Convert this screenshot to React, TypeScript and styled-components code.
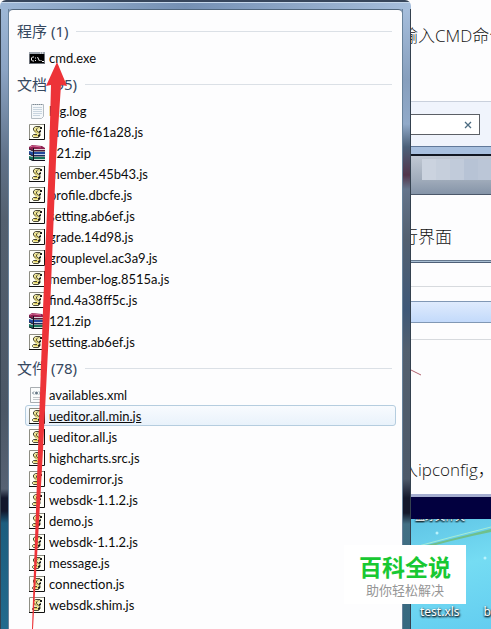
import React from "react";
import styled, { createGlobalStyle } from "styled-components";

const GlobalStyle = createGlobalStyle`
  *, *::before, *::after { box-sizing: border-box; }
  body {
    margin: 0;
    background: #fdfdfe;
    font-family: "Noto Sans", "Noto Sans CJK SC", sans-serif;
  }
  h2, p, ul { margin: 0; padding: 0; font-weight: 400; }
`;

const Screen = styled.div`
  position: relative;
  display: flex;
  min-height: 100vh;
  overflow: hidden;
`;

/* Start menu results */

const Menu = styled.aside`
  flex: 411 1 0;
  min-width: 0;
  display: grid;
  grid-template-columns: 9px 1fr 9px;
  grid-template-rows: 9px 1fr;
  border-radius: 6px 6px 0 0;
  overflow: hidden;
`;

const FrameTop = styled.div`
  grid-column: 1 / -1;
  background: linear-gradient(90deg, #9db7d6, #7590b3 45%, #a6bedc);
  border-top: 2px solid #37465c;
  box-shadow: inset 0 1px #c4d6ea;
`;

const FrameSide = styled.div<{ $side: "left" | "right" }>`
  background: ${(p) =>
    p.$side === "left"
      ? "linear-gradient(#9db7d6 0, #8ba4c4 60px, #5f7188 150px, #53606f 210px, #4b5766 400px, #566273 480px, #12172c 489px, #12172c 502px, #1c5d7e 514px, #226a8d 100%)"
      : "linear-gradient(#a6bedc 0, #879fbd 70px, #91aac9 115px, #4c6079 138px, #53344a 166px, #64748b 180px, #536070 230px, #3f5878 300px, #53606f 340px, #4d5969 470px, #14182c 489px, #14182c 504px, #426f84 515px, #376980 100%)"};
  border: solid #34414f;
  border-width: ${(p) => (p.$side === "left" ? "0 0 0 1px" : "0 1px 0 0")};
  box-shadow: inset ${(p) => (p.$side === "left" ? "-1px" : "1px")} 0 #68829b;
`;

const Results = styled.main`
  min-width: 0;
  padding: 5px 6px 14px 8px;
  background: #fdfdfe;
  border-top: 1px solid #51677e;
  border-radius: 4px 4px 0 0;
`;

const Corner = styled.div`
  background: #8da6c6;
  min-width: 0;
  display: grid;
`;

const GroupTitle = styled.h2`
  display: flex;
  align-items: center;
  gap: 8px;
  height: 32px;
  color: #36485f;
  font-size: 15px;
  line-height: 20px;
  white-space: nowrap;

  &::after {
    content: "";
    flex: 1;
    height: 1px;
    margin-right: 4px;
    background: #dbe0e6;
  }
`;

const FileList = styled.ul`
  list-style: none;
`;

const FileButton = styled.button<{ $selected?: boolean }>`
  display: flex;
  align-items: center;
  gap: 4px;
  width: 100%;
  height: 21px;
  padding: 0 0 0 3px;
  border: 1px solid ${(p) => (p.$selected ? "#b5cddf" : "transparent")};
  border-radius: 3px;
  background: ${(p) =>
    p.$selected ? "linear-gradient(#f8fbfe, #e9f2fb)" : "transparent"};
  color: #0c0c0c;
  font-family: Lato, "Noto Sans", sans-serif;
  font-size: 13px;
  line-height: 18px;
  text-align: left;
  text-decoration: ${(p) => (p.$selected ? "underline" : "none")};
  white-space: nowrap;

  svg { flex: none; }
`;

const FileRow = styled.li`
  padding-left: 8px;
`;

/* Page behind the menu */

const Backdrop = styled.section`
  flex: 80 1 0;
  min-width: 0;
  display: flex;
  flex-direction: column;
  overflow: hidden;
`;

const Line = styled.p<{ $height: number }>`
  display: flex;
  align-items: center;
  height: ${(p) => p.$height}px;
  margin-left: -10px;
  color: #141414;
  font-family: "Open Sans", "Noto Sans CJK SC", sans-serif;
  font-size: 17px;
  font-weight: 300;
  line-height: 24px;
  white-space: nowrap;
`;

const Article = styled.div<{ $top: number; $bottom: number }>`
  padding: ${(p) => p.$top}px 0 ${(p) => p.$bottom}px;
`;

const SearchPanel = styled.form`
  display: flex;
  height: 45px;
  padding: 12px 11px 11px 0;
  background: #f0f4fc;
  border-top: 1px solid #c9d0dc;
`;

const SearchBox = styled.div`
  display: flex;
  flex: 1;
  min-width: 0;
  border: 1px solid #5c6066;
  border-left: 0;
  background: #fff;
`;

const SearchInput = styled.input`
  flex: 1;
  min-width: 0;
  border: 0;
  padding: 0;
  background: transparent;
  outline: none;
`;

const ClearButton = styled.button`
  display: grid;
  place-items: center;
  width: 22px;
  padding: 0;
  border: 0;
  background: transparent;
`;

const TaskEdge = styled.div`
  height: 10px;
  background: #a8c0df;
  border-top: 1px solid #61799a;
  border-bottom: 2px solid #111722;
`;

const TaskGlass = styled.div`
  display: grid;
  grid-template-columns: 10px 1fr;
  height: 39px;
  padding: 3px 0 14px 1px;
  background: linear-gradient(#c0c8d3, #a2adbc 60%, #8594a8);
  border-bottom: 1px solid #4c586a;
`;

const Mosaic = styled.div`
  grid-column: 2;
  background: linear-gradient(
    90deg,
    #cbd3df 0 14px,
    #c6cfdc 14px 28px,
    #c1cbda 28px 42px,
    #b7c3d5 42px 56px,
    #bbc6d7 56px
  );
`;

const WindowEdge = styled.div`
  height: 3px;
  background: #a9bfd3;
  border-bottom: 1px solid #4e6078;
  border-top: 1px solid #66798f;
`;

const MenuStrip = styled.div`
  height: 24px;
  border-bottom: 1px solid #d7dade;
`;

const ActiveStrip = styled.div`
  height: 22px;
  margin: 14px 0 16px;
  background: linear-gradient(#dfebfd, #c3dafb);
  border: solid #8198b5;
  border-width: 1px 0;
`;

const Divider = styled.div`
  height: 1px;
  background: #d7dade;
`;

const Scratch = styled.div`
  height: 118px;
  padding-top: 29px;

  svg { display: block; }
`;

const Console = styled.div`
  height: 25px;
  background: #02003f;
  border-top: 3px solid #a5aed0;
`;

const Desktop = styled.div`
  position: relative;
  flex: 1;
  min-height: 110px;
  display: flex;
  flex-direction: column;
  justify-content: space-between;
  background: linear-gradient(165deg, #5fc4e5, #75dcf3 45%, #63cdf0);
  overflow: hidden;
`;

const CutLabel = styled.span`
  height: 4px;
  padding-left: 4px;
  display: flex;
  align-items: flex-end;
  overflow: hidden;
  color: #fff;
  font-size: 10px;
  line-height: 14px;
  text-shadow: 0 1px 2px #000, 0 1px 2px #000;
  white-space: nowrap;
`;

const Swoosh = styled.svg`
  position: absolute;
  top: 0;
  left: 0;
`;

const IconLabels = styled.div`
  display: flex;
  gap: 24px;
  padding: 0 0 9px 9px;
  color: #fff;
  font-size: 12px;
  line-height: 16px;
  text-shadow: 0 1px 2px #000, 1px 1px 2px #123;
  white-space: nowrap;
`;

/* Overlays */

const Arrow = styled.svg`
  position: absolute;
  top: 0;
  left: 0;
  pointer-events: none;
`;

const Brand = styled.div`
  position: absolute;
  right: 25px;
  bottom: 25px;
  padding: 7px 15px 6px;
  background: #fff;
  text-align: center;
  white-space: nowrap;
`;

const BrandName = styled.p`
  color: #18c832;
  font-family: "Noto Sans CJK SC", sans-serif;
  font-size: 23px;
  font-weight: 700;
  line-height: 29px;
`;

const BrandTag = styled.p`
  color: #969696;
  font-family: "Noto Sans CJK SC", sans-serif;
  font-size: 13px;
  line-height: 17px;
`;

type Kind = "cmd" | "log" | "js" | "zip" | "xml";

const CmdIcon = () => (
  <svg width="16" height="16" viewBox="0 0 16 16" aria-hidden="true">
    <rect x="0.5" y="2.5" width="15" height="11" fill="#000" stroke="#6b7078" />
    <rect x="0" y="2" width="16" height="2" fill="#9da4ad" />
    <path d="M11 3h1M13 3h1" stroke="#fff" />
    <path d="M5 7H3.500L2.500 8v2l1 1H5M6.500 7.500v1M6.500 10v1M8.500 7l2 4M11.500 10.500h1M13 11.500h2" fill="none" stroke="#f2f2f2" />
  </svg>
);

const LogIcon = () => (
  <svg width="16" height="16" viewBox="0 0 16 16" aria-hidden="true">
    <path d="M2.500 1.500h12v12l-2 2h-10z" fill="#f5f8fa" stroke="#b4bcc2" />
    <path d="M4 1.500h1M6 1.500h1M8 1.500h1M10 1.500h1M12 1.500h1" stroke="#7e8a94" />
    <path d="M4 4.500h9M4 6.500h9M4 8.500h9M4 10.500h9M4 12.500h7" stroke="#c9d5df" />
  </svg>
);

const ScriptIcon = () => (
  <svg width="16" height="16" viewBox="0 0 16 16" aria-hidden="true">
    <rect x="1" y="1" width="14" height="14" fill="#fffff8" />
    <path d="M.5 15.500V.5h15" fill="none" stroke="#8e8e84" />
    <path d="M15.500 0v15.500H0" fill="none" stroke="#111" />
    <path d="M6 2.500h6l1 2-2 1.500H9l2.500 3-1 4-1.500 1H4.500l-1-2 1-1.500H7L4.500 7V4z" fill="#efe9a4" />
    <path d="M10 3.500l1-1H6.500L4.500 4v2L7 8.500M9 3.500L7.500 5v1.500l3.500 3v2l-1.500 2H4.500l-1-1v-1l1-1H8" fill="none" stroke="#4a4836" />
    <path d="M6.500 4.500h1M6 6l3 3.500M5.500 11.500H9" stroke="#d9c44a" fill="none" />
    <path d="M11 3h2v2h-2zM10 7l2-1v2l-2 1zM9 11l2-1v2l-2 1z" fill="#1c1c1c" />
  </svg>
);

const ZipIcon = () => (
  <svg width="16" height="16" viewBox="0 0 16 16" aria-hidden="true">
    <path d="M0 2l3-2 10 1 3 2v3H4L0 4z" fill="#8e2050" />
    <path d="M1 2l3-1 8 1" stroke="#d96a98" fill="none" />
    <path d="M5 4h11v1H5z" fill="#dcd5d8" />
    <path d="M0 6l4 1h12v4H4L0 9z" fill="#224a9d" />
    <path d="M5 9h11v1H5z" fill="#c3d0e8" />
    <path d="M0 11l4 1h12v4H4l-4-2z" fill="#17735d" />
    <path d="M5 14h11v1H5z" fill="#cfe4dc" />
    <path d="M0 4l4 2h12M0 9l4 2h12M0 14l4 1.500h12M4.500 3v13" stroke="#161220" fill="none" />
  </svg>
);

const XmlIcon = () => (
  <svg width="16" height="16" viewBox="0 0 16 16" aria-hidden="true">
    <path d="M1.500.5h10l3 3v12h-13z" fill="#fbfcfc" stroke="#a8adb1" />
    <path d="M11.500.5v3h3" fill="none" stroke="#b5babd" />
    <path d="M5 4.500L3.500 6 5 7.500M10 4.500L11.500 6 10 7.500" stroke="#667987" fill="none" />
    <circle cx="7.500" cy="6" r="1.500" fill="#667987" />
    <path d="M4 10.500h8M4 12.500h8" stroke="#c2c7ca" />
  </svg>
);

const icons: Record<Kind, () => React.ReactElement> = {
  cmd: CmdIcon,
  log: LogIcon,
  js: ScriptIcon,
  zip: ZipIcon,
  xml: XmlIcon,
};

type FileEntry = { name: string; kind: Kind; selected?: boolean };

const js = (name: string, selected = false): FileEntry => ({ name, kind: "js", selected });

const groups: { title: string; files: FileEntry[] }[] = [
  { title: "程序 (1)", files: [{ name: "cmd.exe", kind: "cmd" }] },
  {
    title: "文档 (95)",
    files: [
      { name: "log.log", kind: "log" },
      js("profile-f61a28.js"),
      { name: "121.zip", kind: "zip" },
      js("member.45b43.js"),
      js("profile.dbcfe.js"),
      js("setting.ab6ef.js"),
      js("grade.14d98.js"),
      js("grouplevel.ac3a9.js"),
      js("member-log.8515a.js"),
      js("find.4a38ff5c.js"),
      { name: "121.zip", kind: "zip" },
      js("setting.ab6ef.js"),
    ],
  },
  {
    title: "文件 (78)",
    files: [
      { name: "availables.xml", kind: "xml" },
      js("ueditor.all.min.js", true),
      js("ueditor.all.js"),
      js("highcharts.src.js"),
      js("codemirror.js"),
      js("websdk-1.1.2.js"),
      js("demo.js"),
      js("websdk-1.1.2.js"),
      js("message.js"),
      js("connection.js"),
      js("websdk.shim.js"),
    ],
  },
];

export default function App() {
  return (
    <>
      <GlobalStyle />
      <Screen>
        <Menu>
          <FrameTop />
          <FrameSide $side="left" />
          <Corner>
            <Results>
              {groups.map((group) => (
                <section key={group.title}>
                  <GroupTitle>{group.title}</GroupTitle>
                  <FileList>
                    {group.files.map((file, i) => {
                      const Icon = icons[file.kind];
                      return (
                        <FileRow key={i}>
                          <FileButton type="button" $selected={file.selected}>
                            <Icon />
                            {file.name}
                          </FileButton>
                        </FileRow>
                      );
                    })}
                  </FileList>
                </section>
              ))}
            </Results>
          </Corner>
          <FrameSide $side="right" />
        </Menu>

        <Backdrop>
          <Article $top={24} $bottom={53}>
            <Line $height={24}>输入CMD命令</Line>
          </Article>
          <SearchPanel onSubmit={(e) => e.preventDefault()}>
            <SearchBox>
              <SearchInput type="text" aria-label="搜索" />
              <ClearButton type="button" aria-label="清除">
                <svg width="8" height="8" viewBox="0 0 8 8" aria-hidden="true">
                  <path d="M1 1l6 6M7 1L1 7" stroke="#4c6c82" strokeWidth="1.300" />
                </svg>
              </ClearButton>
            </SearchBox>
          </SearchPanel>
          <TaskEdge />
          <TaskGlass>
            <Mosaic />
          </TaskGlass>
          <Article $top={30} $bottom={11}>
            <Line $height={24}>行界面</Line>
          </Article>
          <WindowEdge />
          <MenuStrip />
          <ActiveStrip />
          <Divider />
          <Scratch>
            <svg width="12" height="7" viewBox="0 0 12 7" aria-hidden="true">
              <path d="M0 1l10 5" stroke="#b0606c" fill="none" />
            </svg>
          </Scratch>
          <Line $height={24}>入ipconfig，</Line>
          <Article $top={6} $bottom={6} />
          <Console />
          <Desktop>
            <Swoosh width="100%" height="60" viewBox="0 0 80 60" preserveAspectRatio="none" aria-hidden="true">
              <path d="M0 30Q40 20 80 10V13Q40 21 0 33z" fill="#6fc08c" />
              <path d="M0 29Q40 18 80 8" stroke="#a5ecd5" fill="none" />
              <circle cx="26" cy="14" r="1.500" fill="#b9f2fc" />
              <circle cx="74" cy="39" r="1.500" fill="#b9f2fc" />
            </Swoosh>
            <CutLabel>蓝牙文件夹</CutLabel>
            <IconLabels>
              <span>test.xls</span>
              <span>b</span>
            </IconLabels>
          </Desktop>
        </Backdrop>

        <Arrow width="80" height="629" viewBox="0 0 80 629" aria-hidden="true">
          <path d="M57 62L67 86L61 85L56 160L50 310L43 450L33 629H32L38 450L43 310L49 160L51 85L46 86z" fill="#ed3338" />
        </Arrow>

        <Brand>
          <BrandName>百科全说</BrandName>
          <BrandTag>助你轻松解决</BrandTag>
        </Brand>
      </Screen>
    </>
  );
}
